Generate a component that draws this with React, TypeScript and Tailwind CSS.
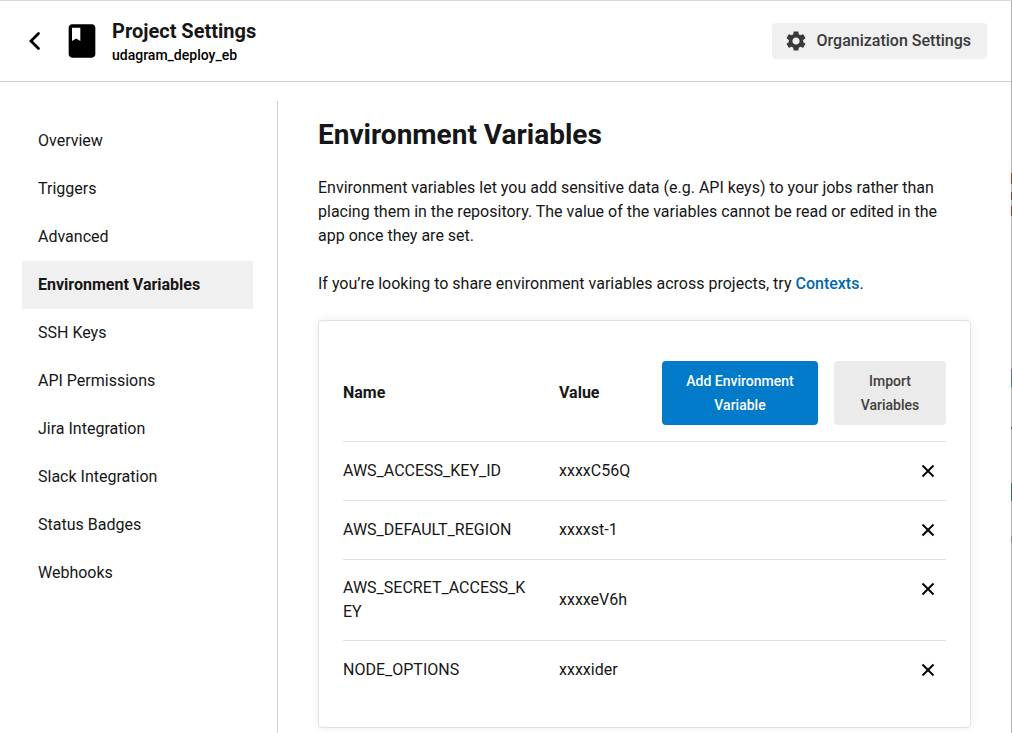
import { MdBook, MdSettings } from "react-icons/md";

const sections = [
  "Overview",
  "Triggers",
  "Advanced",
  "Environment Variables",
  "SSH Keys",
  "API Permissions",
  "Jira Integration",
  "Slack Integration",
  "Status Badges",
  "Webhooks",
];

const current = "Environment Variables";

const variables = [
  { name: "AWS_ACCESS_KEY_ID", value: "xxxxC56Q" },
  { name: "AWS_DEFAULT_REGION", value: "xxxxst-1" },
  { name: "AWS_SECRET_ACCESS_KEY", value: "xxxxeV6h" },
  { name: "NODE_OPTIONS", value: "xxxxider" },
];

function Header() {
  return (
    <header className="flex items-center justify-between border-b border-[#d2d2d2] py-[14px] pr-6 pl-[22px]">
      <div className="flex items-center">
        <button type="button" aria-label="Back" className="flex size-6 items-center justify-center text-black">
          <svg viewBox="0 0 24 24" className="size-6" fill="none" stroke="currentColor" strokeWidth="2.8" strokeLinecap="round" strokeLinejoin="miter">
            <path d="M16.5 4.5 9 12l7.5 7.5" />
          </svg>
        </button>
        <MdBook className="ml-4 size-10 text-black" aria-hidden="true" />
        <div className="ml-[10px] pt-1">
          <h2 className="text-xl leading-6 font-bold">Project Settings</h2>
          <p className="text-sm leading-6 font-medium text-black">udagram_deploy_eb</p>
        </div>
      </div>
      <button type="button" className="flex h-9 items-center gap-[9px] rounded bg-[#f0f0f0] pr-4 pl-3 font-medium text-[#3a3a3a]">
        <MdSettings className="size-6" aria-hidden="true" />
        Organization Settings
      </button>
    </header>
  );
}

function Sidebar() {
  return (
    <nav aria-label="Project settings" className="w-[278px] shrink-0 border-r border-[#d2d2d2] pt-4 pr-6 pl-[22px]">
      <ul>
        {sections.map((section) => (
          <li key={section}>
            <a
              href="#"
              aria-current={section === current ? "page" : undefined}
              className={
                section === current
                  ? "block bg-[#f0f0f0] px-4 py-3 leading-6 font-bold"
                  : "block px-4 py-3 leading-6"
              }
            >
              {section}
            </a>
          </li>
        ))}
      </ul>
    </nav>
  );
}

function VariableTable() {
  return (
    <div className="mt-6 rounded border border-[#e2e2e2] px-6 pt-6 pb-7 shadow-[0_0_10px_rgba(0,0,0,0.07)]">
      <table className="w-full table-fixed border-separate border-spacing-0 text-left leading-6">
        <colgroup>
          <col className="w-[216px]" />
          <col />
          <col className="w-[284px]" />
        </colgroup>
        <thead>
          <tr>
            <th scope="col" className="font-bold">Name</th>
            <th scope="col" className="font-bold">Value</th>
            <th className="py-4">
              <div className="flex gap-4 text-sm leading-6 font-medium">
                <button type="button" className="flex-1 rounded bg-[#007ac9] px-6 py-2 leading-6 text-white">
                  Add Environment Variable
                </button>
                <button type="button" className="w-28 rounded bg-[#ebebeb] px-6 py-2 leading-6 text-[#404040]">
                  Import Variables
                </button>
              </div>
            </th>
          </tr>
        </thead>
        <tbody>
          {variables.map(({ name, value }) => (
            <tr key={name}>
              <td className="border-t border-[#e2e2e2] py-4 pr-8 break-all">{name}</td>
              <td className="border-t border-[#e2e2e2] py-4">{value}</td>
              <td className="border-t border-[#e2e2e2] py-4 align-top">
                <button type="button" aria-label={`Remove ${name}`} className="ml-auto flex h-[26px] w-9 items-center justify-center text-black">
                  <svg viewBox="0 0 14 14" className="size-3.5" fill="none" stroke="currentColor" strokeWidth="1.9" aria-hidden="true">
                    <path d="M1.5 1.5 12.5 12.5M12.5 1.5 1.5 12.5" />
                  </svg>
                </button>
              </td>
            </tr>
          ))}
        </tbody>
      </table>
    </div>
  );
}

function WindowEdge() {
  return (
    <div aria-hidden="true" className="absolute inset-y-0 right-0 w-px bg-[#b2b2b2]">
      <div className="mt-[172px] h-[11px] bg-[#ab3535]" />
      <div className="mt-2 h-2 bg-[#ab3535]" />
      <div className="mt-[6px] h-[10px] bg-[#ab3535]" />
      <div className="mt-[153px] h-[18px] bg-[#4673b5]" />
      <div className="mt-10 h-[2px] bg-[#555555]" />
      <div className="mt-[54px] h-[18px] bg-[#2f7a58]" />
      <div className="mt-[35px] h-[6px] bg-[#858585]" />
    </div>
  );
}

export default function App() {
  return (
    <div className="relative flex min-h-screen flex-col border-t border-[#d8d8d8] bg-white pr-px font-[Roboto,sans-serif] text-base text-[#161616]">
      <Header />
      <div className="flex flex-1 pt-[19px]">
        <Sidebar />
        <main className="min-w-0 flex-1 pt-4 pr-10 pl-10">
          <h1 className="text-[28px] leading-9 font-bold">Environment Variables</h1>
          <p className="mt-[23px] pr-6 leading-6">
            Environment variables let you add sensitive data (e.g. API keys) to your jobs rather than placing them in
            the repository. The value of the variables cannot be read or edited in the app once they are set.
          </p>
          <p className="mt-6 pr-6 leading-6">
            If you’re looking to share environment variables across projects, try{" "}
            <a href="#" className="font-medium text-[#0068b0]">Contexts</a>.
          </p>
          <VariableTable />
        </main>
      </div>
      <WindowEdge />
    </div>
  );
}
